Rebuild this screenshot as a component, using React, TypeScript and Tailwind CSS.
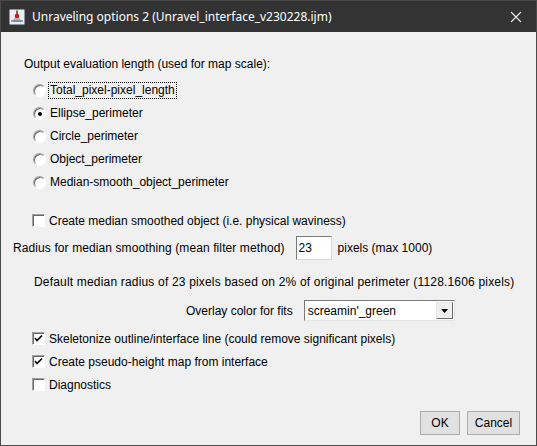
import React from "react";

function Radio({ checked, label, focused }: { checked?: boolean; label: string; focused?: boolean }) {
  return (
    <div className="flex h-[23px] items-center pl-[32px]">
      <span className="relative mr-[2px] h-[13px] w-[13px] rounded-full border border-t-[#a0a0a0] border-l-[#a0a0a0] border-b-[#ffffff] border-r-[#ffffff] bg-white shadow-[inset_1px_1px_0_#696969]">
        {checked && <span className="absolute left-[3.5px] top-[3.5px] h-[4px] w-[4px] rounded-full bg-black" />}
      </span>
      <span className={focused ? "border border-dotted border-black px-[1px] leading-[15px]" : "px-[2px] leading-[15px]"}>{label}</span>
    </div>
  );
}

function Check({ checked, label }: { checked?: boolean; label: string }) {
  return (
    <div className="flex h-[23px] items-center pl-[31px]">
      <span className="mr-[4px] flex h-[13px] w-[13px] items-center justify-center border border-t-[#a0a0a0] border-l-[#a0a0a0] border-b-[#ffffff] border-r-[#ffffff] bg-white shadow-[inset_1px_1px_0_#696969]">
        {checked && (
          <svg width="9" height="9" viewBox="0 0 9 9">
            <path d="M1 4 L3 6.5 L8 1.5" stroke="#000" strokeWidth="1.6" fill="none" />
          </svg>
        )}
      </span>
      <span>{label}</span>
    </div>
  );
}

export default function App() {
  return (
    <div className="flex h-[446px] w-[537px] flex-col border border-[#4a4a4a] bg-[#f0f0f0] font-['Liberation_Sans',Arial,sans-serif] text-[12px] text-black">
      {/* Title bar */}
      <div className="flex h-[31px] shrink-0 items-center bg-[#333333] pl-[8px] pr-[14px] font-['Noto_Sans',sans-serif] text-[12px] text-white">
        <svg width="16" height="16" viewBox="0 0 16 16" className="mr-[7px]">
          <rect x="0.5" y="0.5" width="15" height="15" rx="1" fill="#e8eef4" stroke="#8a96a6" />
          <path d="M3 13 L8 5 L13 13 Z" fill="#b0b8c4" />
          <circle cx="8" cy="7" r="2.3" fill="#c02020" />
          <path d="M8 1.5 L8 5" stroke="#404040" strokeWidth="1.5" />
          <path d="M2 12 L14 12" stroke="#506070" strokeWidth="1" />
        </svg>
        <span className="flex-1">Unraveling options 2 (Unravel_interface_v230228.ijm)</span>
        <svg width="12" height="12" viewBox="0 0 12 12">
          <path d="M1 1 L11 11 M11 1 L1 11" stroke="#f0e8f4" strokeWidth="1.1" />
        </svg>
      </div>

      <div className="flex flex-1 flex-col">
        <div className="ml-[23px] mt-[25px] leading-[15px]">Output evaluation length (used for map scale):</div>
        <div className="mt-[7px] flex flex-col">
          <Radio label="Total_pixel-pixel_length" focused />
          <Radio label="Ellipse_perimeter" checked />
          <Radio label="Circle_perimeter" />
          <Radio label="Object_perimeter" />
          <Radio label="Median-smooth_object_perimeter" />
        </div>

        <div className="mt-[15px]">
          <Check label="Create median smoothed object (i.e. physical waviness)" />
        </div>

        <div className="mt-[4px] flex h-[24px] items-center pl-[12px]">
          <span className="tracking-[0.1px]">Radius for median smoothing (mean filter method)</span>
          <div className="ml-[11px] flex h-[24px] w-[36px] items-start border border-[#7a7a7a] border-b-[#d8d8d8] border-r-[#d8d8d8] bg-white pl-[2px] pt-[2px]">
            23
          </div>
          <span className="ml-[6px]">pixels (max 1000)</span>
        </div>

        <div className="ml-[33px] mt-[15px] leading-[15px] tracking-[0.18px]">
          Default median radius of 23 pixels based on 2% of original perimeter (1128.1606 pixels)
        </div>

        <div className="mt-[10px] flex h-[21px] items-center pl-[185px]">
          <span>Overlay color for fits</span>
          <div className="ml-[11px] flex h-[21px] w-[151px] items-center border border-[#7a7a7a] border-b-[#e4e4e4] border-r-[#e4e4e4] bg-white pl-[3px]">
            <span className="flex-1">screamin'_green</span>
            <div className="mr-[1px] flex h-[17px] w-[17px] items-center justify-center border border-[#e4e4e4] border-b-[#6a6a6a] border-r-[#6a6a6a] bg-[#f0f0f0]">
              <svg width="7" height="4" viewBox="0 0 7 4">
                <path d="M0 0 L7 0 L3.5 4 Z" fill="#000" />
              </svg>
            </div>
          </div>
        </div>

        <div className="mt-[6px] flex flex-col">
          <Check label="Skeletonize outline/interface line (could remove significant pixels)" checked />
          <Check label="Create pseudo-height map from interface" checked />
          <Check label="Diagnostics" />
        </div>

        <div className="mt-[15px] flex justify-end gap-[7px] pr-[16px]">
          <button className="h-[24px] w-[40px] border border-[#adadad] bg-[#e1e1e1]">OK</button>
          <button className="h-[24px] w-[53px] border border-[#adadad] bg-[#e1e1e1]">Cancel</button>
        </div>
      </div>
    </div>
  );
}
